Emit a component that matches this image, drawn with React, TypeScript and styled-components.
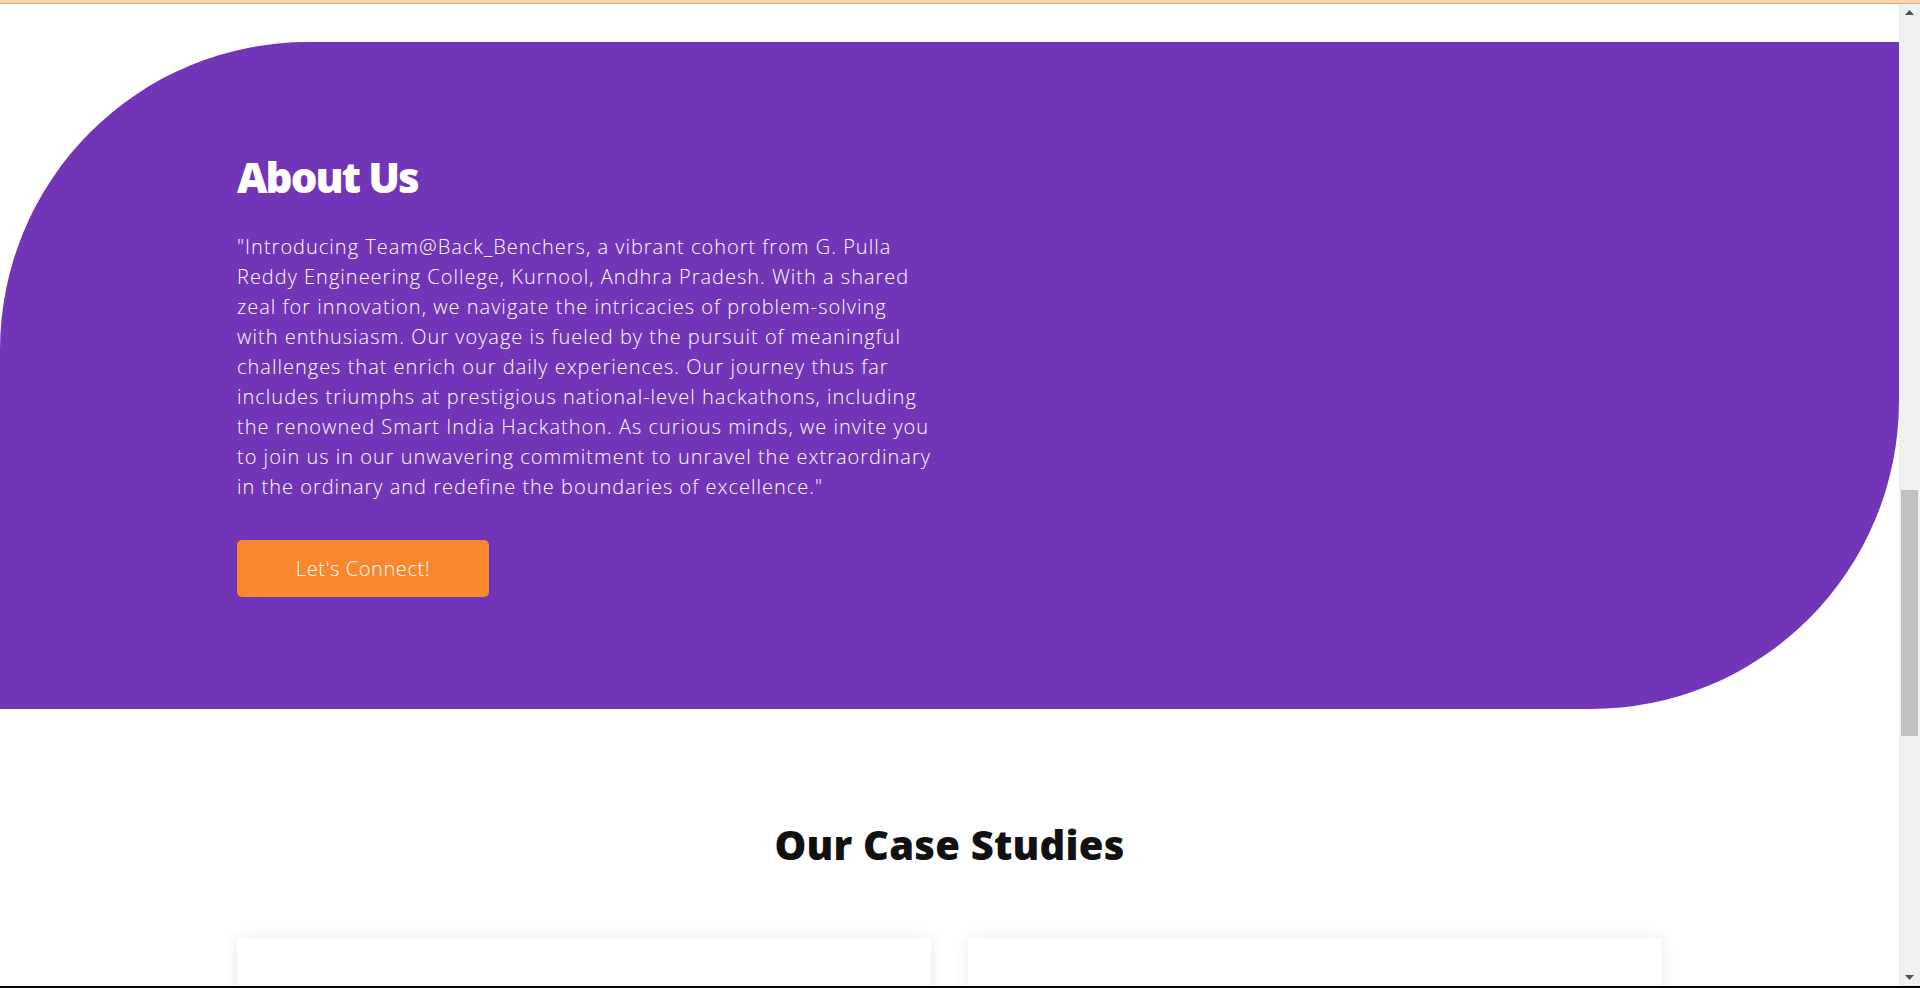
import React from "react";
import styled, { createGlobalStyle } from "styled-components";

const GlobalStyle = createGlobalStyle`
  html, body {
    margin: 0;
    padding: 0;
    height: 988px;
    overflow: hidden;
    background: #ffffff;
  }
  * { box-sizing: border-box; }
`;

const FONT = `"Open Sans", "Liberation Sans", sans-serif`;

const Frame = styled.div`
  width: 1920px;
  height: 988px;
  display: flex;
  flex-direction: column;
  overflow: hidden;
`;

const TopStrip = styled.div`
  height: 4px;
  flex: none;
  background: #f9d3ad;
  border-bottom: 1px solid #d8b18d;
`;

const BottomStrip = styled.div`
  height: 2px;
  flex: none;
  background: #000000;
`;

const Viewport = styled.div`
  flex: 1;
  min-height: 0;
  display: flex;
`;

const Page = styled.main`
  flex: 1;
  min-width: 0;
  overflow: hidden;
  padding-top: 38px;
  background: #ffffff;
`;

const AboutSection = styled.section`
  height: 667px;
  background: #7335b7;
  border-radius: 308px 0 308px 0;
  padding-top: 110px;
`;

const Container = styled.div`
  width: 1425px;
  margin: 0 auto;
`;

const TwoColumns = styled.div`
  display: grid;
  grid-template-columns: 694px 694px;
  column-gap: 37px;
`;

const AboutText = styled.div`
  display: flex;
  flex-direction: column;
  align-items: flex-start;
`;

const AboutTitle = styled.h2`
  margin: 0;
  font-family: ${FONT};
  font-weight: 800;
  font-size: 42px;
  line-height: 1.2;
  color: #ffffff;
  letter-spacing: -1.9px;
`;

const AboutParagraph = styled.p`
  margin: 30px 0 0;
  font-family: ${FONT};
  font-weight: 300;
  font-size: 20px;
  line-height: 30px;
  color: #ffffff;
  letter-spacing: 1px;
  white-space: nowrap;
`;

const ConnectButton = styled.button`
  margin-top: 38px;
  width: 252px;
  height: 57px;
  border: none;
  border-radius: 5px;
  background: #f8872e;
  color: #ffffff;
  font-family: ${FONT};
  font-size: 20px;
  font-weight: 300;
  letter-spacing: 0.6px;
  padding: 0;
  cursor: pointer;
`;

const CaseSection = styled.section`
  padding-top: 112px;
`;

const CaseTitle = styled.h2`
  margin: 0;
  text-align: center;
  font-family: ${FONT};
  font-weight: 800;
  font-size: 40px;
  line-height: 1.2;
  color: #111111;
  letter-spacing: 0.2px;
`;

const CardGrid = styled(TwoColumns)`
  margin-top: 69px;
`;

const Card = styled.div`
  height: 320px;
  background: #ffffff;
  box-shadow: 0 0 14px rgba(0, 0, 0, 0.09);
`;

const Scrollbar = styled.div`
  width: 21px;
  flex: none;
  background: #f0f0f0;
  display: flex;
  flex-direction: column;
  align-items: center;
`;

const ScrollArrow = styled.div`
  height: 17px;
  width: 17px;
  flex: none;
  display: flex;
  align-items: center;
  justify-content: center;
`;

const ScrollTrack = styled.div`
  flex: 1;
  width: 100%;
  display: flex;
  flex-direction: column;
  align-items: center;
  padding-top: 469px;
`;

const ScrollThumb = styled.div`
  width: 17px;
  height: 246px;
  background: #c1c1c1;
`;

const lines = [
  "\"Introducing Team@Back_Benchers, a vibrant cohort from G. Pulla",
  "Reddy Engineering College, Kurnool, Andhra Pradesh. With a shared",
  "zeal for innovation, we navigate the intricacies of problem-solving",
  "with enthusiasm. Our voyage is fueled by the pursuit of meaningful",
  "challenges that enrich our daily experiences. Our journey thus far",
  "includes triumphs at prestigious national-level hackathons, including",
  "the renowned Smart India Hackathon. As curious minds, we invite you",
  "to join us in our unwavering commitment to unravel the extraordinary",
  "in the ordinary and redefine the boundaries of excellence.\"",
];

const Arrow: React.FC<{ up?: boolean }> = ({ up }) => (
  <svg width="9" height="5" viewBox="0 0 9 5">
    {up ? (
      <polygon points="0,5 9,5 4.5,0" fill="#505050" />
    ) : (
      <polygon points="0,0 9,0 4.5,5" fill="#505050" />
    )}
  </svg>
);

export default function App() {
  return (
    <>
      <GlobalStyle />
      <Frame>
        <TopStrip />
        <Viewport>
          <Page>
            <AboutSection>
              <Container>
                <TwoColumns>
                  <AboutText>
                    <AboutTitle>About Us</AboutTitle>
                    <AboutParagraph>
                      {lines.map((l, i) => (
                        <React.Fragment key={i}>
                          {l}
                          {i < lines.length - 1 && <br />}
                        </React.Fragment>
                      ))}
                    </AboutParagraph>
                    <ConnectButton>Let's Connect!</ConnectButton>
                  </AboutText>
                  <div />
                </TwoColumns>
              </Container>
            </AboutSection>
            <CaseSection>
              <Container>
                <CaseTitle>Our Case Studies</CaseTitle>
                <CardGrid>
                  <Card />
                  <Card />
                </CardGrid>
              </Container>
            </CaseSection>
          </Page>
          <Scrollbar>
            <ScrollArrow>
              <Arrow up />
            </ScrollArrow>
            <ScrollTrack>
              <ScrollThumb />
            </ScrollTrack>
            <ScrollArrow>
              <Arrow />
            </ScrollArrow>
          </Scrollbar>
        </Viewport>
        <BottomStrip />
      </Frame>
    </>
  );
}
